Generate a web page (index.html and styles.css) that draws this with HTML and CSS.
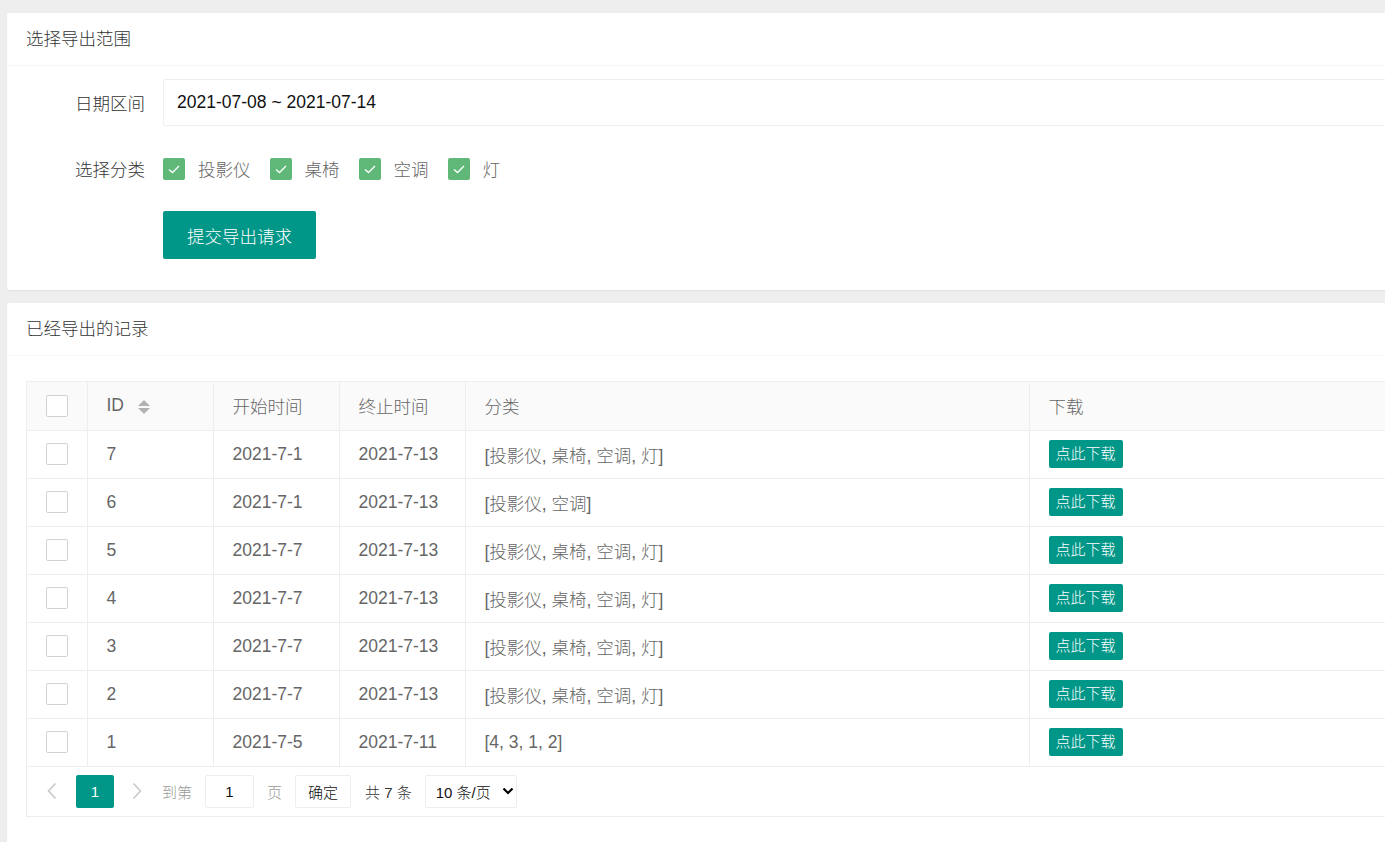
FILE: index.html
```html
<!DOCTYPE html>
<html lang="zh-CN">
<head>
<meta charset="utf-8">
<title>导出</title>
<link rel="stylesheet" href="styles.css">
</head>
<body>
<div class="page">
  <div class="card">
    <div class="card-header">选择导出范围</div>
    <div class="card-body form">
      <div class="form-item">
        <label class="form-label">日期区间</label>
        <div class="input-block"><div class="input">2021-07-08 ~ 2021-07-14</div></div>
      </div>
      <div class="form-item">
        <label class="form-label">选择分类</label>
        <div class="input-block checks">
          <span class="chk"><i class="chk-box"><svg viewBox="0 0 22 22" width="22" height="22"><polyline points="6,11.5 9.5,14.5 16,8" fill="none" stroke="#fff" stroke-width="1.4"/></svg></i><span class="chk-text">投影仪</span></span>
          <span class="chk"><i class="chk-box"><svg viewBox="0 0 22 22" width="22" height="22"><polyline points="6,11.5 9.5,14.5 16,8" fill="none" stroke="#fff" stroke-width="1.4"/></svg></i><span class="chk-text">桌椅</span></span>
          <span class="chk"><i class="chk-box"><svg viewBox="0 0 22 22" width="22" height="22"><polyline points="6,11.5 9.5,14.5 16,8" fill="none" stroke="#fff" stroke-width="1.4"/></svg></i><span class="chk-text">空调</span></span>
          <span class="chk"><i class="chk-box"><svg viewBox="0 0 22 22" width="22" height="22"><polyline points="6,11.5 9.5,14.5 16,8" fill="none" stroke="#fff" stroke-width="1.4"/></svg></i><span class="chk-text">灯</span></span>
        </div>
      </div>
      <div class="form-item">
        <div class="input-block btn-block"><button class="btn">提交导出请求</button></div>
      </div>
    </div>
  </div>

  <div class="card">
    <div class="card-header">已经导出的记录</div>
    <div class="card-body card-body-table">
      <div class="table-box">
        <table class="table">
          <colgroup>
            <col style="width:60px"><col style="width:126px"><col style="width:126px"><col style="width:126px"><col style="width:564px"><col>
          </colgroup>
          <thead>
            <tr>
              <th class="c-chk"><i class="box"></i></th>
              <th>ID <span class="sort"><i class="up"></i><i class="down"></i></span></th>
              <th>开始时间</th>
              <th>终止时间</th>
              <th>分类</th>
              <th>下载</th>
            </tr>
          </thead>
          <tbody>
            <tr><td class="c-chk"><i class="box"></i></td><td>7</td><td>2021-7-1</td><td>2021-7-13</td><td>[投影仪, 桌椅, 空调, 灯]</td><td><span class="btn-xs">点此下载</span></td></tr>
            <tr><td class="c-chk"><i class="box"></i></td><td>6</td><td>2021-7-1</td><td>2021-7-13</td><td>[投影仪, 空调]</td><td><span class="btn-xs">点此下载</span></td></tr>
            <tr><td class="c-chk"><i class="box"></i></td><td>5</td><td>2021-7-7</td><td>2021-7-13</td><td>[投影仪, 桌椅, 空调, 灯]</td><td><span class="btn-xs">点此下载</span></td></tr>
            <tr><td class="c-chk"><i class="box"></i></td><td>4</td><td>2021-7-7</td><td>2021-7-13</td><td>[投影仪, 桌椅, 空调, 灯]</td><td><span class="btn-xs">点此下载</span></td></tr>
            <tr><td class="c-chk"><i class="box"></i></td><td>3</td><td>2021-7-7</td><td>2021-7-13</td><td>[投影仪, 桌椅, 空调, 灯]</td><td><span class="btn-xs">点此下载</span></td></tr>
            <tr><td class="c-chk"><i class="box"></i></td><td>2</td><td>2021-7-7</td><td>2021-7-13</td><td>[投影仪, 桌椅, 空调, 灯]</td><td><span class="btn-xs">点此下载</span></td></tr>
            <tr><td class="c-chk"><i class="box"></i></td><td>1</td><td>2021-7-5</td><td>2021-7-11</td><td>[4, 3, 1, 2]</td><td><span class="btn-xs">点此下载</span></td></tr>
          </tbody>
        </table>
        <div class="pager">
          <span class="pg-arrow"><svg viewBox="0 0 10 18" width="10" height="18"><polyline points="8.5,1.5 1.5,9 8.5,16.5" fill="none" stroke="#c9c9c9" stroke-width="1.6"/></svg></span>
          <span class="pg-cur">1</span>
          <span class="pg-arrow pg-next"><svg viewBox="0 0 10 18" width="10" height="18"><polyline points="1.5,1.5 8.5,9 1.5,16.5" fill="none" stroke="#c9c9c9" stroke-width="1.6"/></svg></span>
          <span class="pg-text pg-skip">到第</span>
          <span class="pg-input">1</span>
          <span class="pg-text pg-ye">页</span>
          <span class="pg-btn">确定</span>
          <span class="pg-count">共 7 条</span>
          <span class="pg-select">10 条/页<svg viewBox="0 0 12 8" width="12" height="8"><polyline points="1.5,1.5 6,6 10.5,1.5" fill="none" stroke="#000" stroke-width="2.2"/></svg></span>
        </div>
      </div>
    </div>
  </div>
</div>
</body>
</html>
```

FILE: styles.css
```css
html, body {
  margin: 0;
  padding: 0;
  overflow: hidden;
}
body {
  background: #eeeeee;
  font-family: "Liberation Sans", "Noto Sans CJK SC", Arial, sans-serif;
  font-size: 17.5px;
  font-weight: 300;
  color: #333;
}
.page {
  padding: 13px 0 0 7px;
  width: 1420px;
}
.card {
  background: #fff;
  border-radius: 2px;
  box-shadow: 0 1px 2px 0 rgba(0,0,0,0.06);
  margin-bottom: 13px;
}
.card-header {
  height: 52px;
  line-height: 52px;
  padding: 0 19px;
  border-bottom: 1px solid #f6f6f6;
  color: #333;
  font-size: 17.5px;
}
.card-body {
  padding: 13px 19px;
}
.card-body-table {
  padding-bottom: 40px;
}
.form {
  padding-top: 13px;
  padding-bottom: 12px;
}
.form-item {
  display: flex;
  align-items: center;
  min-height: 47px;
  margin-bottom: 19px;
}
.form-label {
  width: 137px;
  padding-right: 18px;
  text-align: right;
  color: #333;
  box-sizing: border-box;
  flex: none;
}
.input-block {
  flex: 1;
  display: flex;
  align-items: center;
}
.btn-block {
  margin-left: 137px;
}
.input {
  flex: 1;
  height: 47px;
  line-height: 45px;
  box-sizing: border-box;
  border: 1px solid #eeeeee;
  border-radius: 2px;
  padding: 0 13px;
  color: #111;
}
.chk {
  display: inline-flex;
  align-items: center;
  margin-right: 19px;
}
.chk-box {
  display: inline-block;
  width: 22px;
  height: 22px;
  background: #5fb878;
  border-radius: 2px;
}
.chk-box svg { display: block; }
.chk-text {
  margin-left: 13px;
  color: #666;
}
.btn {
  height: 48px;
  padding: 0 24px;
  background: #009688;
  color: #fff;
  border: none;
  border-radius: 2px;
  font-family: inherit;
  font-weight: 300;
  font-size: 17.5px;
  cursor: pointer;
}
.table-box {
  border: 1px solid #eeeeee;
  margin-top: 12px;
}
.table {
  width: 100%;
  border-collapse: collapse;
  table-layout: fixed;
  color: #666;
}
.table th, .table td {
  height: 48px;
  padding: 0 19px;
  border-right: 1px solid #eeeeee;
  border-bottom: 1px solid #eeeeee;
  text-align: left;
  font-weight: 300;
  white-space: nowrap;
  box-sizing: border-box;
}
.table th {
  background: #fafafa;
  color: #666;
}
.table td:last-child, .table th:last-child { border-right: none; }
.table .c-chk {
  text-align: center;
  padding: 0;
  position: relative;
  z-index: 1;
  box-shadow: 4px 0 7px -3px rgba(0,0,0,0.09);
}
.box {
  display: inline-block;
  width: 20px;
  height: 20px;
  border: 1px solid #d2d2d2;
  border-radius: 2px;
  background: #fff;
  vertical-align: middle;
}
.sort {
  display: inline-flex;
  flex-direction: column;
  vertical-align: middle;
  margin-left: 9px;
  gap: 2px;
}
.sort i {
  display: block;
  width: 0;
  height: 0;
  border-left: 6px solid transparent;
  border-right: 6px solid transparent;
}
.sort .up { border-bottom: 6px solid #b2b2b2; }
.sort .down { border-top: 6px solid #b2b2b2; }
.btn-xs {
  display: inline-block;
  height: 28px;
  line-height: 28px;
  padding: 0 7px;
  background: #009688;
  color: #fff;
  font-size: 15px;
  border-radius: 2px;
  vertical-align: middle;
}
.pager {
  display: flex;
  align-items: center;
  height: 49px;
  padding-left: 9px;
  font-size: 15px;
}
.pg-arrow {
  width: 31px;
  height: 33px;
  display: inline-flex;
  align-items: center;
  justify-content: center;
}
.pg-arrow svg { display: block; }
.pg-cur {
  margin-left: 9px;
  width: 38px;
  height: 33px;
  line-height: 33px;
  text-align: center;
  background: #009688;
  color: #fff;
  border-radius: 2px;
}
.pg-next { margin-left: 7px; }
.pg-text { color: #999; }
.pg-skip { margin-left: 10px; }
.pg-input {
  margin-left: 13px;
  width: 49px;
  height: 33px;
  line-height: 31px;
  box-sizing: border-box;
  border: 1px solid #eeeeee;
  border-radius: 2px;
  text-align: center;
  color: #111;
}
.pg-ye { margin-left: 13px; }
.pg-btn {
  margin-left: 13px;
  width: 56px;
  height: 33px;
  line-height: 33px;
  box-sizing: border-box;
  border: 1px solid #eeeeee;
  border-radius: 2px;
  text-align: center;
  color: #111;
}
.pg-count {
  margin-left: 14px;
  color: #333;
}
.pg-select {
  margin-left: 13px;
  width: 92px;
  height: 33px;
  box-sizing: border-box;
  border: 1px solid #eeeeee;
  border-radius: 2px;
  display: inline-flex;
  align-items: center;
  padding-left: 10px;
  color: #111;
}
.pg-select svg {
  margin-left: 11px;
}
```
